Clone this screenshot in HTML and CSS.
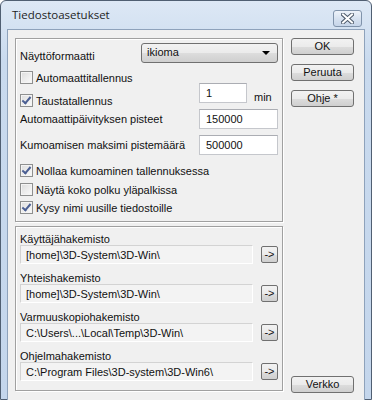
FILE: index.html
```html
<!DOCTYPE html>
<html lang="fi">
<head>
    <meta charset="UTF-8">
    <title>Tiedostoasetukset</title>
    <link rel="stylesheet" href="styles.css">
</head>
<body>
    <div class="window">
        <div class="titlebar">
            <span class="title">Tiedostoasetukset</span>
            <div class="close">
                <svg width="13" height="11" viewBox="0 0 13 11">
                    <path d="M2 1.5 L11 9.5 M11 1.5 L2 9.5" stroke="#4d5a6b" stroke-width="4" stroke-linecap="square"/>
                    <path d="M2 1.5 L11 9.5 M11 1.5 L2 9.5" stroke="#ffffff" stroke-width="2" stroke-linecap="square"/>
                </svg>
            </div>
        </div>
        <div class="client">
            <div class="main">
                <div class="group options">
                    <div class="row row-format">
                        <span class="label">Näyttöformaatti</span>
                        <div class="combo">ikioma<span class="arrow"></span></div>
                    </div>
                    <div class="row row-auto">
                        <span class="check"></span><span>Automaattitallennus</span>
                    </div>
                    <div class="row row-bg">
                        <span class="check on"></span><span class="check-text">Taustatallennus</span>
                        <div class="field short">1</div>
                        <span class="unit">min</span>
                    </div>
                    <div class="row row-num">
                        <span class="label wide">Automaattipäivityksen pisteet</span>
                        <div class="field">150000</div>
                    </div>
                    <div class="row row-num second">
                        <span class="label wide">Kumoamisen maksimi pistemäärä</span>
                        <div class="field">500000</div>
                    </div>
                    <div class="row row-c1">
                        <span class="check on"></span><span>Nollaa kumoaminen tallennuksessa</span>
                    </div>
                    <div class="row row-c2">
                        <span class="check"></span><span>Näytä koko polku yläpalkissa</span>
                    </div>
                    <div class="row row-c3">
                        <span class="check on"></span><span>Kysy nimi uusille tiedostoille</span>
                    </div>
                </div>
                <div class="group dirs">
                    <div class="dir">
                        <div class="dir-label">Käyttäjähakemisto</div>
                        <div class="dir-row"><div class="path">[home]\3D-System\3D-Win\</div><div class="go">-&gt;</div></div>
                    </div>
                    <div class="dir">
                        <div class="dir-label">Yhteishakemisto</div>
                        <div class="dir-row"><div class="path">[home]\3D-System\3D-Win\</div><div class="go">-&gt;</div></div>
                    </div>
                    <div class="dir">
                        <div class="dir-label">Varmuuskopiohakemisto</div>
                        <div class="dir-row"><div class="path">C:\Users\...\Local\Temp\3D-Win\</div><div class="go">-&gt;</div></div>
                    </div>
                    <div class="dir">
                        <div class="dir-label">Ohjelmahakemisto</div>
                        <div class="dir-row"><div class="path">C:\Program Files\3D-system\3D-Win6\</div><div class="go">-&gt;</div></div>
                    </div>
                </div>
            </div>
            <div class="side">
                <div class="btn">OK</div>
                <div class="btn">Peruuta</div>
                <div class="btn">Ohje *</div>
                <div class="btn verkko">Verkko</div>
            </div>
        </div>
    </div>
</body>
</html>
```

FILE: styles.css
```css
body {
    margin: 0;
    font-family: "Liberation Sans", Arial, sans-serif;
    font-size: 11px;
    color: #111;
    background: #fff;
}
.window {
    width: 372px;
    height: 400px;
    box-sizing: border-box;
    border: 1px solid #505f72;
    border-radius: 6px 6px 0 0;
    padding: 0 6px 3px 6px;
    background: linear-gradient(#dde8f5, #c9daee 60px, #c4d6ec);
}
.titlebar {
    height: 28px;
    display: flex;
    align-items: center;
    position: relative;
}
.title {
    font-family: "Open Sans", sans-serif;
    font-size: 11.5px;
    margin-left: 5px;
    margin-top: -1px;
    color: #1e1e1e;
}
.close {
    position: absolute;
    right: 3px;
    top: 9px;
    width: 27px;
    height: 15px;
    border: 1px solid #8093ab;
    border-radius: 3px;
    background: linear-gradient(#eef3fa, #d7e2f0 50%, #c6d5e9);
    display: flex;
    align-items: center;
    justify-content: center;
}
.client {
    border: 1px solid #8ea2bb;
    background: #f0f0f0;
    height: 365px;
    display: flex;
    padding: 8px 10px 4px 7px;
    box-sizing: content-box;
    width: 339px;
}
.main {
    width: 268px;
    display: flex;
    flex-direction: column;
    gap: 4px;
}
.group {
    border: 1px solid #a0a0a0;
    box-shadow: inset 1px 1px 0 #fff, 1px 1px 0 #fff;
    box-sizing: border-box;
}
.options {
    height: 184px;
    padding: 4px 4px 0 4px;
}
.row {
    display: flex;
    align-items: center;
}
.row-format {
    height: 20px;
    justify-content: space-between;
}
.row-format .label {
    margin-top: 6px;
}
.combo {
    width: 137px;
    height: 20px;
    box-sizing: border-box;
    border: 1px solid #707070;
    border-radius: 3px;
    background: linear-gradient(#f2f2f2, #ebebeb 50%, #dddddd 51%, #cfcfcf);
    padding: 1px 0 0 5px;
    position: relative;
    line-height: 15px;
}
.arrow {
    position: absolute;
    right: 7px;
    top: 7px;
    border-left: 4px solid transparent;
    border-right: 4px solid transparent;
    border-top: 4px solid #000;
}
.check {
    width: 13px;
    height: 13px;
    box-sizing: border-box;
    border: 1px solid #8e8f8f;
    background: linear-gradient(135deg, #dcdcdc, #fbfbfb);
    box-shadow: inset 0 0 0 1px #f4f4f4;
    margin-right: 3px;
    flex-shrink: 0;
    position: relative;
}
.check.on::after {
    content: "";
    position: absolute;
    left: 3px;
    top: 0px;
    width: 3px;
    height: 7px;
    border-right: 2px solid #4b5f93;
    border-bottom: 2px solid #4b5f93;
    transform: rotate(40deg);
}
.row-auto {
    height: 13px;
    margin-top: 8px;
}
.row-bg {
    height: 24px;
    margin-top: -1px;
    align-items: flex-end;
}
.check-text {
    width: 163px;
}
.field {
    width: 79px;
    height: 20px;
    box-sizing: border-box;
    border: 1px solid #c5c7cc;
    border-top-color: #abadb3;
    background: #fff;
    padding: 3px 0 0 6px;
    align-self: flex-start;
}
.field.short {
    width: 48px;
}
.unit {
    margin-left: 7px;
    margin-bottom: 4px;
}
.row-num {
    height: 20px;
    margin-top: 2px;
}
.row-num.second {
    margin-top: 6px;
}
.label.wide {
    width: 179px;
}
.row-c1 {
    height: 13px;
    margin-top: 9px;
}
.row-c2 {
    height: 13px;
    margin-top: 6px;
}
.row-c3 {
    height: 13px;
    margin-top: 5px;
}
.dirs {
    height: 165px;
    padding: 6px 4px 0 4px;
}
.dir {
    margin-bottom: 8px;
}
.dir-label {
    height: 12px;
    line-height: 12px;
}
.dir-row {
    display: flex;
    gap: 8px;
}
.path {
    width: 233px;
    height: 19px;
    box-sizing: border-box;
    border: 1px solid #d3d3d3;
    border-bottom-color: #fff;
    border-right-color: #fff;
    background: #f3f3f3;
    padding: 3px 0 0 5px;
    white-space: nowrap;
    overflow: hidden;
}
.go {
    width: 17px;
    height: 17px;
    margin-top: 1px;
    box-sizing: border-box;
    border: 1px solid #707070;
    border-radius: 2px;
    background: linear-gradient(#f2f2f2, #ebebeb 50%, #dddddd 51%, #cfcfcf);
    text-align: center;
    line-height: 14px;
}
.side {
    width: 63px;
    margin-left: 8px;
    display: flex;
    flex-direction: column;
    gap: 9px;
    padding-bottom: 10px;
    box-sizing: border-box;
}
.btn {
    height: 17px;
    box-sizing: border-box;
    border: 1px solid #707070;
    border-radius: 3px;
    background: linear-gradient(#f2f2f2, #ebebeb 50%, #dddddd 51%, #cfcfcf);
    text-align: center;
    line-height: 14px;
}
.verkko {
    margin-top: auto;
}
```
